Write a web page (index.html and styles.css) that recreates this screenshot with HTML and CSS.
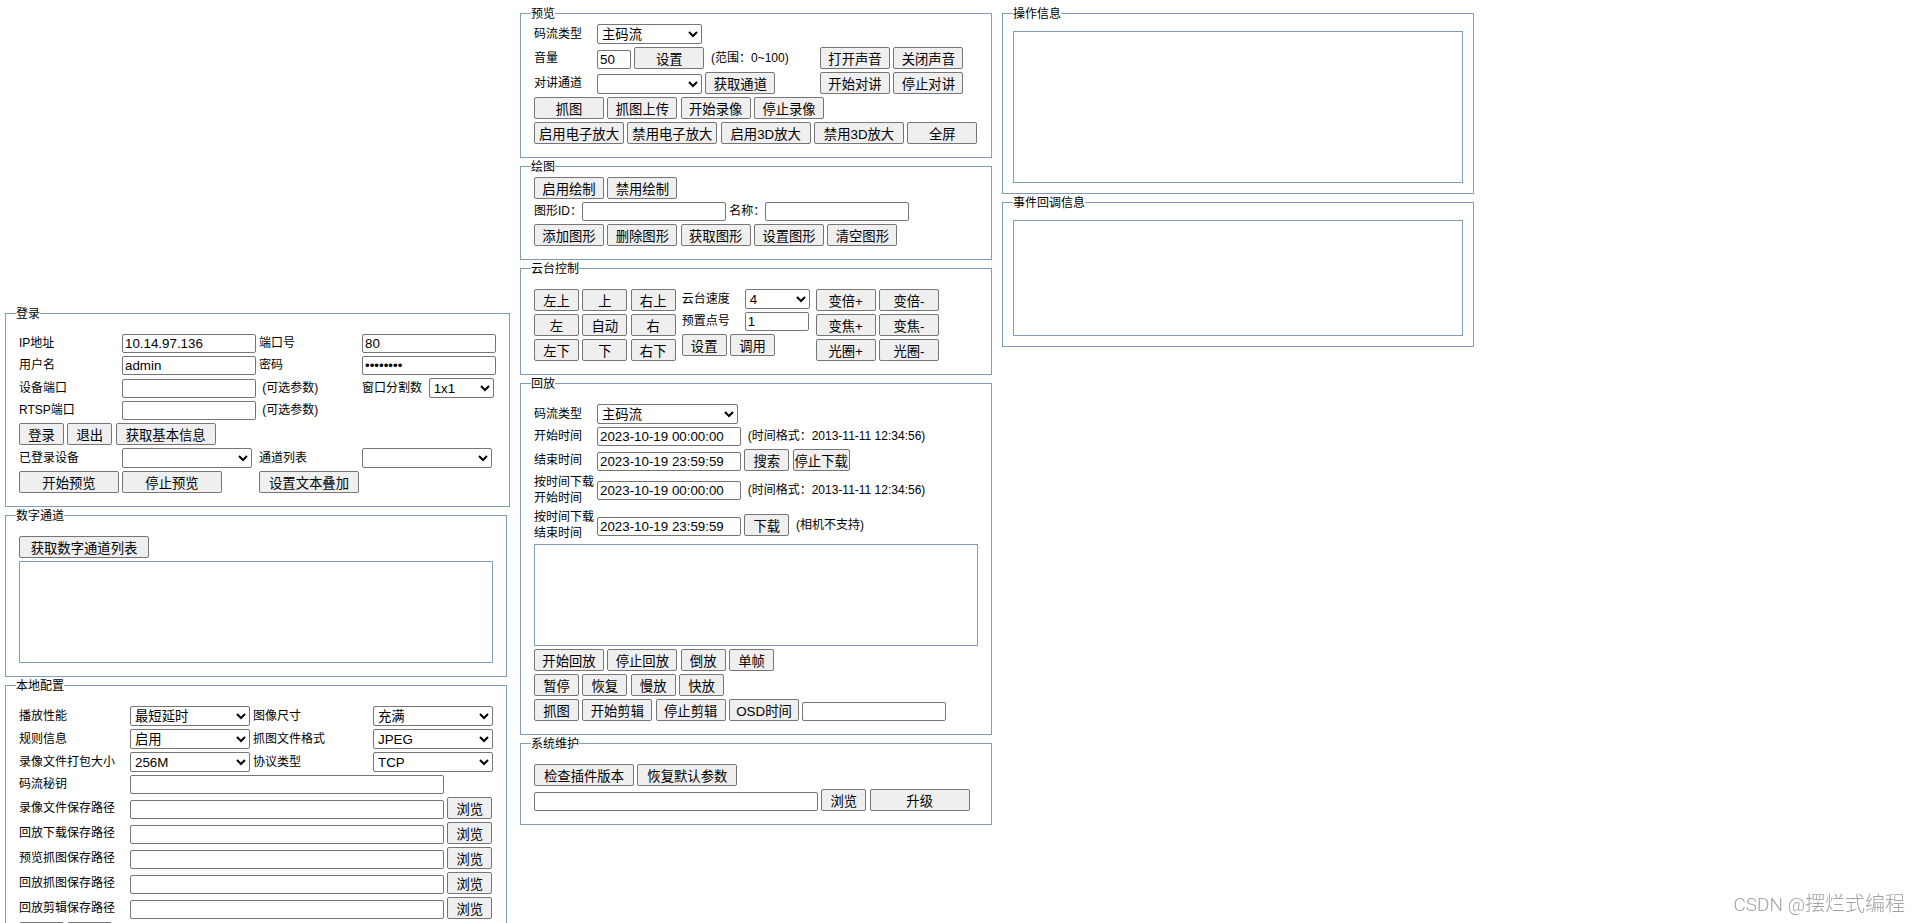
FILE: index.html
```html
<!DOCTYPE html>
<html lang="zh-CN">
<head>
<meta charset="utf-8">
<title>预览控制台</title>
<link rel="stylesheet" href="styles.css">
</head>
<body>
<main class="page">
  <div class="column column-left">
    <div class="plugin"></div>
    <fieldset class="panel">
      <legend>登录</legend>
      <div class="rows">
        <div class="row row-input login-grid">
          <label for="ip">IP地址</label><input id="ip" class="w-field" type="text" value="10.14.97.136">
          <label for="port">端口号</label><input id="port" class="w-field" type="text" value="80">
        </div>
        <div class="row row-input login-grid">
          <label for="user">用户名</label><input id="user" class="w-field" type="text" value="admin">
          <label for="password">密码</label><input id="password" class="w-field" type="password" value="password">
        </div>
        <div class="row row-select login-grid">
          <label for="device-port">设备端口</label><input id="device-port" class="w-field" type="text">
          <span>&nbsp;(可选参数)</span>
          <div><label for="split">窗口分割数&nbsp;</label> <select id="split" class="w-65"><option>1x1</option></select></div>
        </div>
        <div class="row row-input login-grid">
          <label for="rtsp-port">RTSP端口</label><input id="rtsp-port" class="w-field" type="text">
          <span>&nbsp;(可选参数)</span>
        </div>
        <div class="row">
          <button class="w-45">登录</button>
          <button class="w-45">退出</button>
          <button class="w-100">获取基本信息</button>
        </div>
        <div class="row row-select login-grid">
          <label for="devices">已登录设备</label><select id="devices" class="w-130"></select>
          <label for="channels">通道列表</label><select id="channels" class="w-130"></select>
        </div>
        <div class="row login-grid">
          <button class="w-100">开始预览</button>
          <button class="w-100">停止预览</button>
          <button class="w-100">设置文本叠加</button>
        </div>
      </div>
    </fieldset>

    <fieldset class="panel panel-inset">
      <legend>数字通道</legend>
      <div class="rows">
        <div class="row"><button class="w-130">获取数字通道列表</button></div>
        <div class="list"></div>
      </div>
    </fieldset>

    <fieldset class="panel panel-inset">
      <legend>本地配置</legend>
      <div class="rows">
        <div class="row row-select config-grid">
          <label for="performance">播放性能</label><select id="performance"><option>最短延时</option></select>
          <label for="image-size">图像尺寸</label><select id="image-size"><option>充满</option></select>
        </div>
        <div class="row row-select config-grid">
          <label for="rules">规则信息</label><select id="rules"><option>启用</option></select>
          <label for="capture-format">抓图文件格式</label><select id="capture-format"><option>JPEG</option></select>
        </div>
        <div class="row row-select config-grid">
          <label for="pack-size">录像文件打包大小</label><select id="pack-size"><option>256M</option></select>
          <label for="protocol">协议类型</label><select id="protocol"><option>TCP</option></select>
        </div>
        <div class="row row-input path-grid">
          <label for="secret">码流秘钥</label><input id="secret" class="w-path" type="text">
        </div>
        <div class="row path-grid">
          <label for="record-path">录像文件保存路径</label>
          <div><input id="record-path" class="w-path" type="text"> <button class="w-45">浏览</button></div>
        </div>
        <div class="row path-grid">
          <label for="download-path">回放下载保存路径</label>
          <div><input id="download-path" class="w-path" type="text"> <button class="w-45">浏览</button></div>
        </div>
        <div class="row path-grid">
          <label for="preview-path">预览抓图保存路径</label>
          <div><input id="preview-path" class="w-path" type="text"> <button class="w-45">浏览</button></div>
        </div>
        <div class="row path-grid">
          <label for="playback-path">回放抓图保存路径</label>
          <div><input id="playback-path" class="w-path" type="text"> <button class="w-45">浏览</button></div>
        </div>
        <div class="row path-grid">
          <label for="clip-path">回放剪辑保存路径</label>
          <div><input id="clip-path" class="w-path" type="text"> <button class="w-45">浏览</button></div>
        </div>
        <div class="row">
          <button class="w-45" aria-label="获取"></button>
          <button class="w-45" aria-label="设置"></button>
        </div>
      </div>
    </fieldset>
  </div>

  <div class="column">
    <fieldset class="panel panel-compact">
      <legend>预览</legend>
      <div class="rows">
        <div class="row row-select preview-grid">
          <label for="stream">码流类型</label><select id="stream" class="w-105"><option>主码流</option></select>
        </div>
        <div class="row preview-grid">
          <label for="volume">音量</label>
          <div><input id="volume" class="w-34" type="text" value="50"> <button class="w-70">设置</button> &nbsp;(范围：0~100)</div>
          <div><button class="w-70">打开声音</button> <button class="w-70">关闭声音</button></div>
        </div>
        <div class="row preview-grid">
          <label for="talk">对讲通道</label>
          <div><select id="talk" class="w-105"></select> <button class="w-70">获取通道</button></div>
          <div><button class="w-70">开始对讲</button> <button class="w-70">停止对讲</button></div>
        </div>
        <div class="row">
          <button class="w-70">抓图</button>
          <button class="w-70">抓图上传</button>
          <button class="w-70">开始录像</button>
          <button class="w-70">停止录像</button>
        </div>
        <div class="row">
          <button class="w-90">启用电子放大</button>
          <button class="w-90">禁用电子放大</button>
          <button class="w-90">启用3D放大</button>
          <button class="w-90">禁用3D放大</button>
          <button class="w-70">全屏</button>
        </div>
      </div>
    </fieldset>

    <fieldset class="panel panel-compact">
      <legend>绘图</legend>
      <div class="rows">
        <div class="row">
          <button class="w-70">启用绘制</button>
          <button class="w-70">禁用绘制</button>
        </div>
        <div class="row row-input">
          <label for="shape-id">图形ID：</label><input id="shape-id" class="w-144" type="text">
          <label for="shape-name">名称：</label><input id="shape-name" class="w-144" type="text">
        </div>
        <div class="row">
          <button class="w-70">添加图形</button>
          <button class="w-70">删除图形</button>
          <button class="w-70">获取图形</button>
          <button class="w-70">设置图形</button>
          <button class="w-70">清空图形</button>
        </div>
      </div>
    </fieldset>

    <fieldset class="panel">
      <legend>云台控制</legend>
      <div class="ptz">
        <div class="rows">
          <div class="row"><button class="w-45">左上</button> <button class="w-45">上</button> <button class="w-45">右上</button></div>
          <div class="row"><button class="w-45">左</button> <button class="w-45">自动</button> <button class="w-45">右</button></div>
          <div class="row"><button class="w-45">左下</button> <button class="w-45">下</button> <button class="w-45">右下</button></div>
        </div>
        <div class="rows">
          <div class="row row-select label-grid">
            <label for="speed">云台速度</label><select id="speed" class="w-65"><option>4</option></select>
          </div>
          <div class="row row-input label-grid">
            <label for="preset">预置点号</label><input id="preset" class="w-64" type="text" value="1">
          </div>
          <div class="row"><button class="w-45">设置</button> <button class="w-45">调用</button></div>
        </div>
        <div class="rows">
          <div class="row"><button class="w-60">变倍+</button> <button class="w-60">变倍-</button></div>
          <div class="row"><button class="w-60">变焦+</button> <button class="w-60">变焦-</button></div>
          <div class="row"><button class="w-60">光圈+</button> <button class="w-60">光圈-</button></div>
        </div>
      </div>
    </fieldset>

    <fieldset class="panel">
      <legend>回放</legend>
      <div class="rows">
        <div class="row row-select label-grid">
          <label for="playback-stream">码流类型</label><select id="playback-stream" class="w-141"><option>主码流</option></select>
        </div>
        <div class="row row-input label-grid">
          <label for="start-time">开始时间</label>
          <div><input id="start-time" class="w-144" type="text" value="2023-10-19 00:00:00"> &nbsp;(时间格式：2013-11-11 12:34:56)</div>
        </div>
        <div class="row label-grid">
          <label for="end-time">结束时间</label>
          <div><input id="end-time" class="w-144" type="text" value="2023-10-19 23:59:59"> <button class="w-45">搜索</button> <button class="w-57">停止下载</button></div>
        </div>
        <div class="row-double label-grid">
          <label for="download-start">按时间下载<br>开始时间</label>
          <div class="row row-input"><input id="download-start" class="w-144" type="text" value="2023-10-19 00:00:00"> &nbsp;(时间格式：2013-11-11 12:34:56)</div>
        </div>
        <div class="row-double label-grid">
          <label for="download-end">按时间下载<br>结束时间</label>
          <div class="row"><input id="download-end" class="w-144" type="text" value="2023-10-19 23:59:59"> <button class="w-45">下载</button> &nbsp;(相机不支持)</div>
        </div>
        <div class="list"></div>
        <div class="row">
          <button class="w-70">开始回放</button>
          <button class="w-70">停止回放</button>
          <button class="w-45">倒放</button>
          <button class="w-45">单帧</button>
        </div>
        <div class="row">
          <button class="w-45">暂停</button>
          <button class="w-45">恢复</button>
          <button class="w-45">慢放</button>
          <button class="w-45">快放</button>
        </div>
        <div class="row">
          <button class="w-45">抓图</button>
          <button class="w-70">开始剪辑</button>
          <button class="w-70">停止剪辑</button>
          <button class="w-70">OSD时间</button>
          <input class="w-144" type="text" aria-label="OSD时间">
        </div>
      </div>
    </fieldset>

    <fieldset class="panel">
      <legend>系统维护</legend>
      <div class="rows">
        <div class="row">
          <button class="w-100">检查插件版本</button>
          <button class="w-100">恢复默认参数</button>
        </div>
        <div class="row">
          <input class="w-284" type="text" aria-label="升级文件">
          <button class="w-45">浏览</button>
          <button class="w-100">升级</button>
        </div>
      </div>
    </fieldset>
  </div>

  <div class="column">
    <fieldset class="panel panel-log">
      <legend>操作信息</legend>
      <div class="log log-operations"></div>
    </fieldset>
    <fieldset class="panel panel-log">
      <legend>事件回调信息</legend>
      <div class="log log-events"></div>
    </fieldset>
  </div>
</main>
<div class="watermark"><span class="watermark-site">CSDN @</span>摆烂式编程</div>
</body>
</html>
```

FILE: styles.css
```css
* {
  box-sizing: border-box;
}

body {
  margin: 0;
  background: #fff;
  color: #000;
  font-family: "Liberation Sans", Arial, "Noto Sans CJK SC", sans-serif;
  font-size: 12px;
  line-height: 16px;
}

.page {
  display: flex;
  align-items: flex-start;
  gap: 10px;
  height: 100vh;
  padding: 5px;
  overflow: hidden;
}

.column {
  flex: 0 0 auto;
  width: 472px;
}

.column-left {
  width: 505px;
}

.plugin {
  height: 300px;
}

/* Panels */
.panel {
  min-width: 0;
  margin: 0;
  padding: 12px 13px 13px;
  border: 1px solid #7f9db9;
}

.panel-inset {
  margin-right: 3px;
}

.panel-compact {
  padding-top: 2px;
}

.panel-log {
  padding: 9px 10px 10px;
}

.panel legend {
  margin-left: -3px;
  padding: 2px 0 0;
  line-height: 15px;
}

.panel-log legend {
  margin-left: 0;
}

.list,
.log {
  border: 1px solid #7f9db9;
}

.list {
  height: 102px;
}

.log-operations {
  height: 152px;
}

.log-events {
  height: 116px;
}

/* Rows */
.rows {
  display: flex;
  flex-direction: column;
  gap: 3px;
}

.row {
  height: 22px;
  line-height: 22px;
  white-space: nowrap;
}

.row-select {
  height: 20px;
  line-height: 20px;
}

.row-input {
  height: 19px;
  line-height: 19px;
}

.login-grid,
.config-grid,
.path-grid,
.preview-grid,
.label-grid {
  display: grid;
  column-gap: 3px;
  justify-items: start;
  align-items: end;
}

.login-grid {
  grid-template-columns: 100px 134px 100px 134px;
}

.config-grid {
  grid-template-columns: 108px 120px 117px 120px;
}

.config-grid select {
  width: 120px;
}

.path-grid {
  grid-template-columns: 108px 1fr;
}

.preview-grid {
  grid-template-columns: 60px 220px 1fr;
}

.label-grid {
  grid-template-columns: 60px 1fr;
}

.row-double {
  height: 32px;
  align-items: center;
}

.ptz {
  display: flex;
  gap: 6px;
}

/* Controls */
button,
input,
select {
  margin: 0;
  border: 1px solid #767676;
  color: #000;
  font-family: inherit;
  vertical-align: bottom;
}

button {
  height: 22px;
  padding: 0;
  border-radius: 2px;
  background: #efefef;
}

input {
  height: 19px;
  padding: 1px 2px;
  border-radius: 2px;
  background: #fff;
}

select {
  height: 20px;
  border-radius: 2px;
  background-color: #fff;
}

.w-34 { width: 34px; }
.w-45 { width: 45px; }
.w-57 { width: 57px; }
.w-60 { width: 60px; }
.w-64 { width: 64px; }
.w-65 { width: 65px; }
.w-70 { width: 70px; }
.w-90 { width: 90px; }
.w-100 { width: 100px; }
.w-105 { width: 105px; }
.w-130 { width: 130px; }
.w-field { width: 134px; }
.w-141 { width: 141px; }
.w-144 { width: 144px; }
.w-284 { width: 284px; }
.w-path { width: 314px; }

.watermark {
  position: fixed;
  right: 15px;
  bottom: 5px;
  color: #a3a3a3;
  font-family: Roboto, "Noto Sans CJK SC", sans-serif;
  font-size: 20px;
  font-weight: 300;
  line-height: 26px;
}

.watermark-site {
  font-size: 19px;
}
```
